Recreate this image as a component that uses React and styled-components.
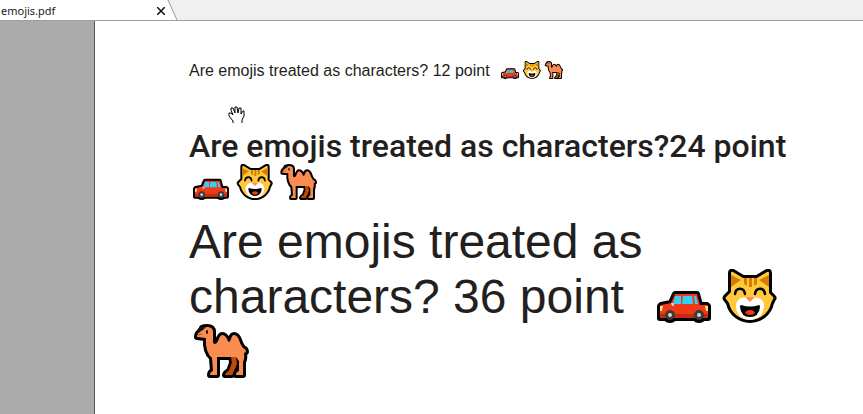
import React from 'react';
import styled, { createGlobalStyle } from 'styled-components';

const outline = {
  stroke: '#000',
  strokeWidth: 6,
  strokeLinejoin: 'round',
  paintOrder: 'stroke',
};

const CarIcon = () => (
  <>
    <circle cx='19' cy='46' r='8' fill='#000' />
    <circle cx='48' cy='46' r='8' fill='#000' />
    <path d='M24 25h22l3 11h7l1 1v12H9V37l1-1 10-2z' fill='#f03a17' {...outline} />
    <path d='M9 45h48v4H9z' fill='#c42b12' />
    <path d='M24 27h6v8h-8zM32 27h9l1 8H31zM43 27h2l2 8h-3z' fill='#31d2f7' />
    <path d='M20 34h3v3h-2z' fill='#d0d0d0' />
    <path d='M9 37h3l-1 5H9zM54 37h3v5h-2z' fill='#fde379' />
    <circle cx='19' cy='46' r='5' fill='#3b3b3b' />
    <circle cx='48' cy='46' r='5' fill='#3b3b3b' />
    <circle cx='19' cy='46' r='2' fill='#d5d5d5' />
    <circle cx='48' cy='46' r='2' fill='#d5d5d5' />
  </>
);

const CatIcon = () => (
  <>
    <path
      d='M14 4q0-2 2-1l10 6h14l10-6q2-1 2 1v20l4 4q1 1 0 2l-2 4C52 44 43 51 33 51S14 44 12 34l-3-4q-1-1 0-2l5-5z'
      fill='#ffc83d'
      {...outline}
    />
    <path d='M14 6l10 5-10 7zM52 6l-10 5 10 7z' fill='#d67d00' />
    <path d='M27 9h3v8l-3-2zM32 9h3v9h-3zM37 9h3v6l-3 2z' fill='#d67d00' />
    <path d='M33 31c5-5 14-2 14 6 0 9-7 14-14 14s-14-5-14-14c0-8 9-11 14-6z' fill='#fff' />
    <path d='M30 28h6q1 0 1 1l-4 4-4-4q0-1 1-1z' fill='#ff8b5a' />
    <path d='M24 36q9 3 18 0 1 0 1 2-1 10-10 10T23 38q0-2 1-2z' fill='#000' />
    <path d='M28 44q1-3 5-3t5 3q-2 2-5 2t-5-2z' fill='#f03a17' />
    <path
      d='M18 25c1-7 9-7 10 0M38 25c1-7 9-7 10 0'
      fill='none'
      stroke='#000'
      strokeWidth='2.5'
      strokeLinecap='round'
    />
  </>
);

const CamelIcon = () => (
  <>
    <path d='M42 30h8l-2 10-5 11h-7q1-3 4-4l3-8z' fill='#bf4908' {...outline} />
    <path
      d='M13 4q2-1 5-1 6 0 6 5v10q0 2 2 2 2 0 3-3 2-6 4-6 3 0 5 4 1 3 2 3t2-3q1-4 3-4 3 0 5 5 1 4 4 8 3 1 3 4l-2 1q1 5-1 9v13h-7q0-3 3-4V37l-3-4H28v18h-7q0-3 3-4l-1-13q-7-6-6-20l-9-1q0-4 3-5z'
      fill='#f98c50'
      {...outline}
    />
    <path d='M42 33h5l1 7-5 11h-7q1-3 4-4l3-8z' fill='#bf4908' />
    <path d='M8 6l4-4 5 1-3 3-4 2z' fill='#111' />
    <path d='M9 11l4-1' stroke='#bf4908' />
    <ellipse cx='18' cy='8' rx='1' ry='2' fill='#000' />
  </>
);

const emojiSizes = {
  small: { font: 16, line: 18, width: 22, height: 18, drop: 3 },
  medium: { font: 32, line: 36, width: 44, height: 36, drop: 7 },
  large: { font: 48, line: 55, width: 66, height: 54, drop: 10 },
};

const Emoji = ({ label, size, children }) => (
  <EmojiStyled viewBox='0 0 66 54' role='img' aria-label={label} $size={emojiSizes[size]}>
    {children}
  </EmojiStyled>
);

const Emojis = ({ size }) => (
  <>
    <Emoji label='car' size={size}><CarIcon /></Emoji>
    <Emoji label='grinning cat' size={size}><CatIcon /></Emoji>
    <Emoji label='camel' size={size}><CamelIcon /></Emoji>
  </>
);

const App = () => {
  return (
    <>
      <GlobalStyle />
      <Viewer>
        <TabBar>
          <Tab>
            <span>emojis.pdf</span>
            <CloseButton aria-label='Close tab'>
              <svg width='8' height='8' viewBox='0 0 8 8'>
                <path d='M0 0l8 8M8 0L0 8' stroke='#111' strokeWidth='1.5' />
              </svg>
            </CloseButton>
          </Tab>
          <TabEdge viewBox='0 0 12 20' aria-hidden='true'>
            <path d='M0 0h1l9 20H0z' fill='#fff' />
            <path d='M1 0l9 20' stroke='#999' fill='none' />
          </TabEdge>
        </TabBar>
        <Workspace>
          <Page>
            <Line $size={emojiSizes.small}>
              Are emojis treated as characters? 12 point{'\u00a0 '}
              <Emojis size='small' />
            </Line>
            <Line $size={emojiSizes.medium} $family='Roboto' $weight={500}>
              Are emojis treated as characters?24 point
              <Emojis size='medium' />
            </Line>
            <Line $size={emojiSizes.large}>
              Are emojis treated as characters? 36 point{'\u00a0 '}
              <Emojis size='large' />
            </Line>
            <HandCursor viewBox='0 0 17 18' aria-hidden='true'>
              <path
                d='M5 17v-2l-4-5V7h2l2 2-2-5V2h2l2 5V1h2l1 6 1-5h2v6l2-3h1v5l-2 4v3'
                fill='#fff'
                stroke='#000'
              />
            </HandCursor>
          </Page>
        </Workspace>
      </Viewer>
    </>
  );
};

const GlobalStyle = createGlobalStyle`
  body {
    margin: 0;
    background: #fff;
  }
`;

const Viewer = styled.div`
  display: flex;
  flex-direction: column;
  min-height: 100vh;
`;

const TabBar = styled.header`
  display: flex;
  height: 20px;
  background: #f0f0f0;
  border-bottom: 1px solid #a0a0a0;
`;

const Tab = styled.div`
  display: flex;
  align-items: center;
  justify-content: space-between;
  box-sizing: border-box;
  width: 167px;
  padding: 2px 2px 0 1px;
  background: #fff;
  color: #1a1a1a;
  font: 11px/16px 'Noto Sans', sans-serif;
`;

const CloseButton = styled.button`
  display: flex;
  padding: 0;
  border: 0;
  background: none;
`;

const TabEdge = styled.svg`
  width: 12px;
  height: 20px;
`;

const Workspace = styled.main`
  display: flex;
  flex: 1;
  padding-left: 94px;
  background: #ababab;
`;

const Page = styled.article`
  position: relative;
  flex: 1;
  padding: 40px 48px 0 94px;
  border-left: 1px solid #555;
  background: #fff;
`;

const Line = styled.p`
  max-width: 624px;
  margin: 0;
  color: #231f20;
  font-family: ${({ $family }) => $family || "'Liberation Sans'"}, Arial, sans-serif;
  font-size: ${({ $size }) => $size.font}px;
  font-weight: ${({ $weight }) => $weight || 400};
  line-height: ${({ $size }) => $size.line}px;

  &:first-child {
    margin-bottom: 48px;
  }

  &:nth-child(2) {
    margin-bottom: 14px;
  }
`;

const EmojiStyled = styled.svg`
  width: ${({ $size }) => $size.width}px;
  height: ${({ $size }) => $size.height}px;
  vertical-align: -${({ $size }) => $size.drop}px;
`;

const HandCursor = styled.svg`
  position: absolute;
  top: 85px;
  left: 133px;
  width: 17px;
  height: 18px;
`;

export default App;
